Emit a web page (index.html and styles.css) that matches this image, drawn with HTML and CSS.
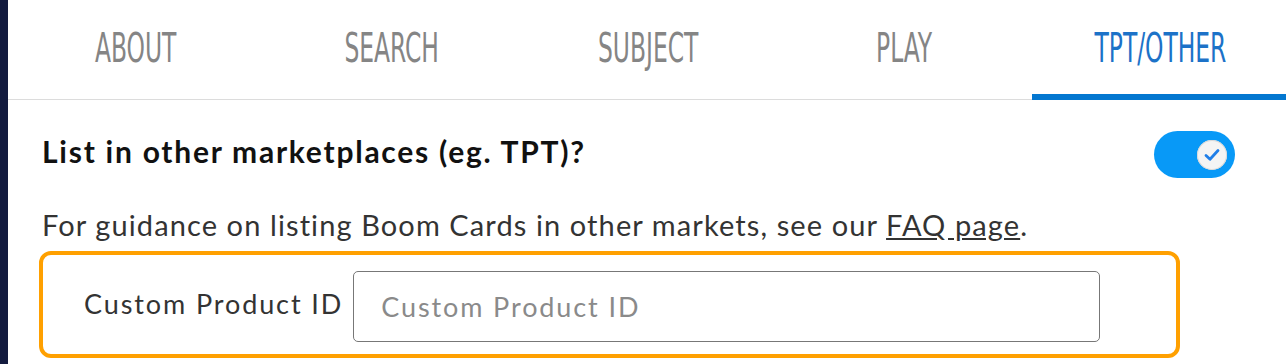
FILE: index.html
```html
<!DOCTYPE html>
<html>
<head>
<meta charset="utf-8">
<link rel="stylesheet" href="styles.css">
</head>
<body>
<div class="page">
  <div class="sidebar"></div>
  <div class="main">
    <nav class="tabs">
      <div class="tab"><span class="tab-label">ABOUT</span></div>
      <div class="tab"><span class="tab-label">SEARCH</span></div>
      <div class="tab"><span class="tab-label">SUBJECT</span></div>
      <div class="tab"><span class="tab-label">PLAY</span></div>
      <div class="tab active"><span class="tab-label">TPT/OTHER</span></div>
    </nav>
    <section class="content">
      <div class="row">
        <h2 class="heading">List in other marketplaces (eg. TPT)?</h2>
        <div class="toggle">
          <div class="knob">
            <svg width="18" height="16" viewBox="0 0 18 16"><path d="M3 8.5 L7 12.2 L15 3.5" fill="none" stroke="#1f7ee8" stroke-width="2.8" stroke-linecap="round" stroke-linejoin="round"/></svg>
          </div>
        </div>
      </div>
      <p class="guide">For guidance on listing Boom Cards in other markets, see our <a class="faq" href="#">FAQ page</a>.</p>
      <div class="highlight">
        <label class="field-label">Custom Product ID</label>
        <input class="field-input" type="text" placeholder="Custom Product ID">
      </div>
    </section>
  </div>
</div>
</body>
</html>
```
FILE: styles.css
```css
html, body {
  margin: 0;
  padding: 0;
  background: #ffffff;
  overflow: hidden;
}
.page {
  display: flex;
  width: 1286px;
  height: 364px;
  overflow: hidden;
}
.sidebar {
  width: 8px;
  flex: none;
  background: #131b3f;
}
.main {
  flex: 1;
  min-width: 0;
  display: flex;
  flex-direction: column;
}
.tabs {
  display: flex;
  height: 99px;
  border-bottom: 1px solid #dcdcdc;
  flex: none;
}
.tab {
  width: 256px;
  flex: none;
  display: flex;
  align-items: center;
  justify-content: center;
  position: relative;
  padding-bottom: 4px;
  box-sizing: border-box;
}
.tab-label {
  display: inline-block;
  font-family: "Liberation Sans Narrow", "DejaVu Sans Condensed", sans-serif;
  font-size: 40px;
  color: #858585;
  transform: scaleX(0.65);
  line-height: 1;
}
.tab.active .tab-label {
  color: #1c72c8;
}
.tab.active::after {
  content: "";
  position: absolute;
  left: 0;
  right: 0;
  bottom: -1px;
  height: 6px;
  background: #0477d0;
}
.content {
  padding: 31px 0 0 34px;
  font-family: Lato, "Open Sans", sans-serif;
}
.row {
  display: flex;
  align-items: center;
  justify-content: space-between;
  padding-right: 51px;
}
.heading {
  margin: 0 0 8px 0;
  font-size: 30px;
  font-weight: 700;
  letter-spacing: 1.75px;
  color: #111111;
}
.toggle {
  width: 81px;
  height: 47px;
  border-radius: 24px;
  background: #0899f7;
  display: flex;
  align-items: center;
  justify-content: flex-end;
  padding-right: 8px;
  box-sizing: border-box;
}
.knob {
  width: 30px;
  height: 30px;
  border-radius: 50%;
  background: #f4f4f4;
  box-shadow: 0 0 0 1px #d8d8d8 inset;
  display: flex;
  align-items: center;
  justify-content: center;
}
.guide {
  margin: 29px 0 0 0;
  font-size: 29px;
  letter-spacing: 1.1px;
  color: #333333;
}
.faq {
  color: #333333;
  text-decoration: underline;
}
.highlight {
  margin: 9px 0 0 -3px;
  width: 1141px;
  height: 107px;
  box-sizing: border-box;
  border: 4px solid #ffa000;
  border-radius: 12px;
  display: flex;
  align-items: flex-start;
  padding: 16px 0 0 41px;
  gap: 10px;
}
.field-label {
  margin-top: 16px;
  font-size: 27px;
  letter-spacing: 1.9px;
  color: #333333;
}
.field-input {
  width: 747px;
  height: 71px;
  box-sizing: border-box;
  border: 1.5px solid #777777;
  border-radius: 5px;
  padding: 0 0 0 27px;
  font-family: Lato, "Open Sans", sans-serif;
  font-size: 27px;
  letter-spacing: 1.9px;
  color: #333;
  outline: none;
}
.field-input::placeholder {
  color: #8a8a8a;
}
```
